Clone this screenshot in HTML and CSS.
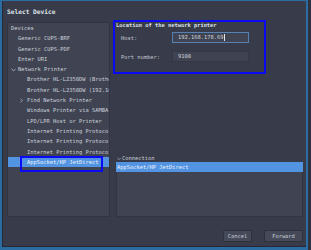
FILE: index.html
```html
<!DOCTYPE html>
<html>
<head>
<meta charset="utf-8">
<link rel="stylesheet" href="styles.css">
</head>
<body>
<div class="window">
  <div class="title">Select Device</div>
  <div class="main">
    <div class="devices">
      <div class="row header">Devices</div>
      <div class="row l1">Generic CUPS-BRF</div>
      <div class="row l1">Generic CUPS-PDF</div>
      <div class="row l1">Enter URI</div>
      <div class="row l1"><svg class="chev down" viewBox="0 0 6 4"><path d="M0.5 0.5 L3 3 L5.5 0.5" /></svg><span>Network Printer</span></div>
      <div class="row l2">Brother HL-L2350DW (Brother HL-L2350DW series)</div>
      <div class="row l2">Brother HL-L2350DW (192.168.178.69)</div>
      <div class="row l2"><svg class="chev fwd" viewBox="0 0 4 6"><path d="M0.5 0.5 L3 3 L0.5 5.5" /></svg><span>Find Network Printer</span></div>
      <div class="row l2">Windows Printer via SAMBA</div>
      <div class="row l2">LPD/LPR Host or Printer</div>
      <div class="row l2">Internet Printing Protocol (ipp)</div>
      <div class="row l2">Internet Printing Protocol (ipps)</div>
      <div class="row l2">Internet Printing Protocol (https)</div>
      <div class="row l2 selected">AppSocket/HP JetDirect</div>
      <div class="mark mark-left"></div>
    </div>
    <div class="side">
      <div class="location">
        <div class="loc-title">Location of the network printer</div>
        <div class="field">
          <span class="label">Host:</span>
          <div class="entry focus">192.168.178.69<span class="caret"></span></div>
        </div>
        <div class="field">
          <span class="label">Port number:</span>
          <div class="entry">9100</div>
        </div>
        <div class="mark mark-top"></div>
      </div>
      <div class="conn">
        <div class="conn-head"><svg class="chev cdown" viewBox="0 0 6 4"><path d="M0.5 0.5 L3 3 L5.5 0.5" /></svg><span>Connection</span></div>
        <div class="conn-list">
          <div class="row selected">AppSocket/HP JetDirect</div>
        </div>
      </div>
    </div>
  </div>
  <div class="buttons">
    <button class="btn cancel">Cancel</button>
    <button class="btn forward">Forward</button>
  </div>
</div>
</body>
</html>
```
FILE: styles.css
```css
html, body {
  margin: 0;
  padding: 0;
}
body {
  width: 311px;
  height: 250px;
  background: #30333e;
  font-family: "DejaVu Sans Mono", "Liberation Mono", monospace;
  font-size: 5.4px;
  color: #cbd0da;
  overflow: hidden;
}
.window {
  box-sizing: border-box;
  width: 308px;
  height: 250px;
  background: #383c4a;
  border-left: 2px solid #2b6ca3;
  border-right: 2px solid #2b6ca3;
  border-top: 1px solid #2b6ca3;
  border-bottom: 3px solid #2b6ca3;
  box-shadow: inset 0 -1px 0 #262933, inset 1px 0 0 #262933;
  padding: 0 3px 0 5px;
  display: flex;
  flex-direction: column;
}
.title {
  height: 8px;
  line-height: 8px;
  padding: 7px 0 6px 0;
  font-weight: bold;
  font-size: 6.2px;
  color: #dfe3ea;
}
.main {
  height: 195px;
  display: flex;
  gap: 6px;
}
.devices {
  position: relative;
  box-sizing: border-box;
  width: 103px;
  height: 195px;
  background: #404452;
  border: 1px solid #323541;
  overflow: hidden;
}
.row {
  box-sizing: border-box;
  height: 10.3px;
  line-height: 10.3px;
  white-space: nowrap;
  overflow: hidden;
}
.devices .row {
  margin-left: -1px;
}
.header { padding-left: 4px; }
.l1 { padding-left: 11px; }
.l2 { padding-left: 20px; }
.chev {
  display: inline-block;
  vertical-align: middle;
  fill: none;
  stroke: #c9ced8;
  stroke-width: 0.9;
}
.chev.down {
  width: 5px;
  height: 4px;
  margin-left: -7px;
  margin-right: 2px;
}
.chev.fwd {
  width: 3px;
  height: 5px;
  margin-left: -7px;
  margin-right: 4px;
}
.selected {
  background: #5294e2;
  color: #eef3fa;
}
.devices .selected {
  margin-right: -1px;
}
.mark {
  position: absolute;
  border: 2px solid #0a0af5;
  pointer-events: none;
}
.mark-left {
  left: 12px;
  top: 133px;
  width: 79px;
  height: 12px;
}
.side {
  flex: 1;
  display: flex;
  flex-direction: column;
  justify-content: space-between;
}
.location {
  position: relative;
  height: 48px;
  margin-top: -2px;
}
.loc-title {
  font-weight: bold;
  height: 8px;
  line-height: 8px;
  padding-top: 1px;
  color: #dde2ea;
}
.field {
  display: flex;
  align-items: center;
  height: 11px;
  margin-top: 3px;
}
.field + .field { margin-top: 8px; }
.label {
  width: 51px;
  padding-left: 5px;
  color: #c0c5d0;
}
.entry {
  box-sizing: border-box;
  width: 77px;
  height: 11px;
  line-height: 9px;
  padding-left: 5px;
  background: #404452;
  border: 1px solid #353844;
  color: #cfd4dc;
  display: flex;
  align-items: center;
}
.entry.focus {
  border-color: #5682b3;
}
.caret {
  display: inline-block;
  width: 0.6px;
  height: 7px;
  background: #e0e4ea;
  margin-left: 1px;
}
.mark-top {
  left: -3px;
  top: 0px;
  width: 149px;
  height: 50px;
}
.conn {
  display: flex;
  flex-direction: column;
}
.conn-head {
  height: 8px;
  line-height: 8px;
  padding-left: 1px;
  white-space: nowrap;
  color: #c9ced8;
}
.chev.cdown {
  width: 4px;
  height: 4px;
  margin-right: 1px;
}
.conn-list {
  box-sizing: border-box;
  height: 55px;
  background: #404452;
  border: 1px solid #323541;
}
.conn-list .row {
  height: 10px;
  line-height: 10px;
  padding-left: 1px;
  margin: -1px -1px 0 -1px;
}
.buttons {
  margin-top: 13px;
  display: flex;
  justify-content: flex-end;
  gap: 12px;
}
.btn {
  box-sizing: border-box;
  height: 12px;
  padding: 0;
  font-family: inherit;
  font-size: 5.4px;
  color: #c9ced8;
  background: #444a58;
  border: 1px solid #2f323d;
  border-radius: 1px;
}
.cancel { width: 29px; }
.forward { width: 39px; }
```
